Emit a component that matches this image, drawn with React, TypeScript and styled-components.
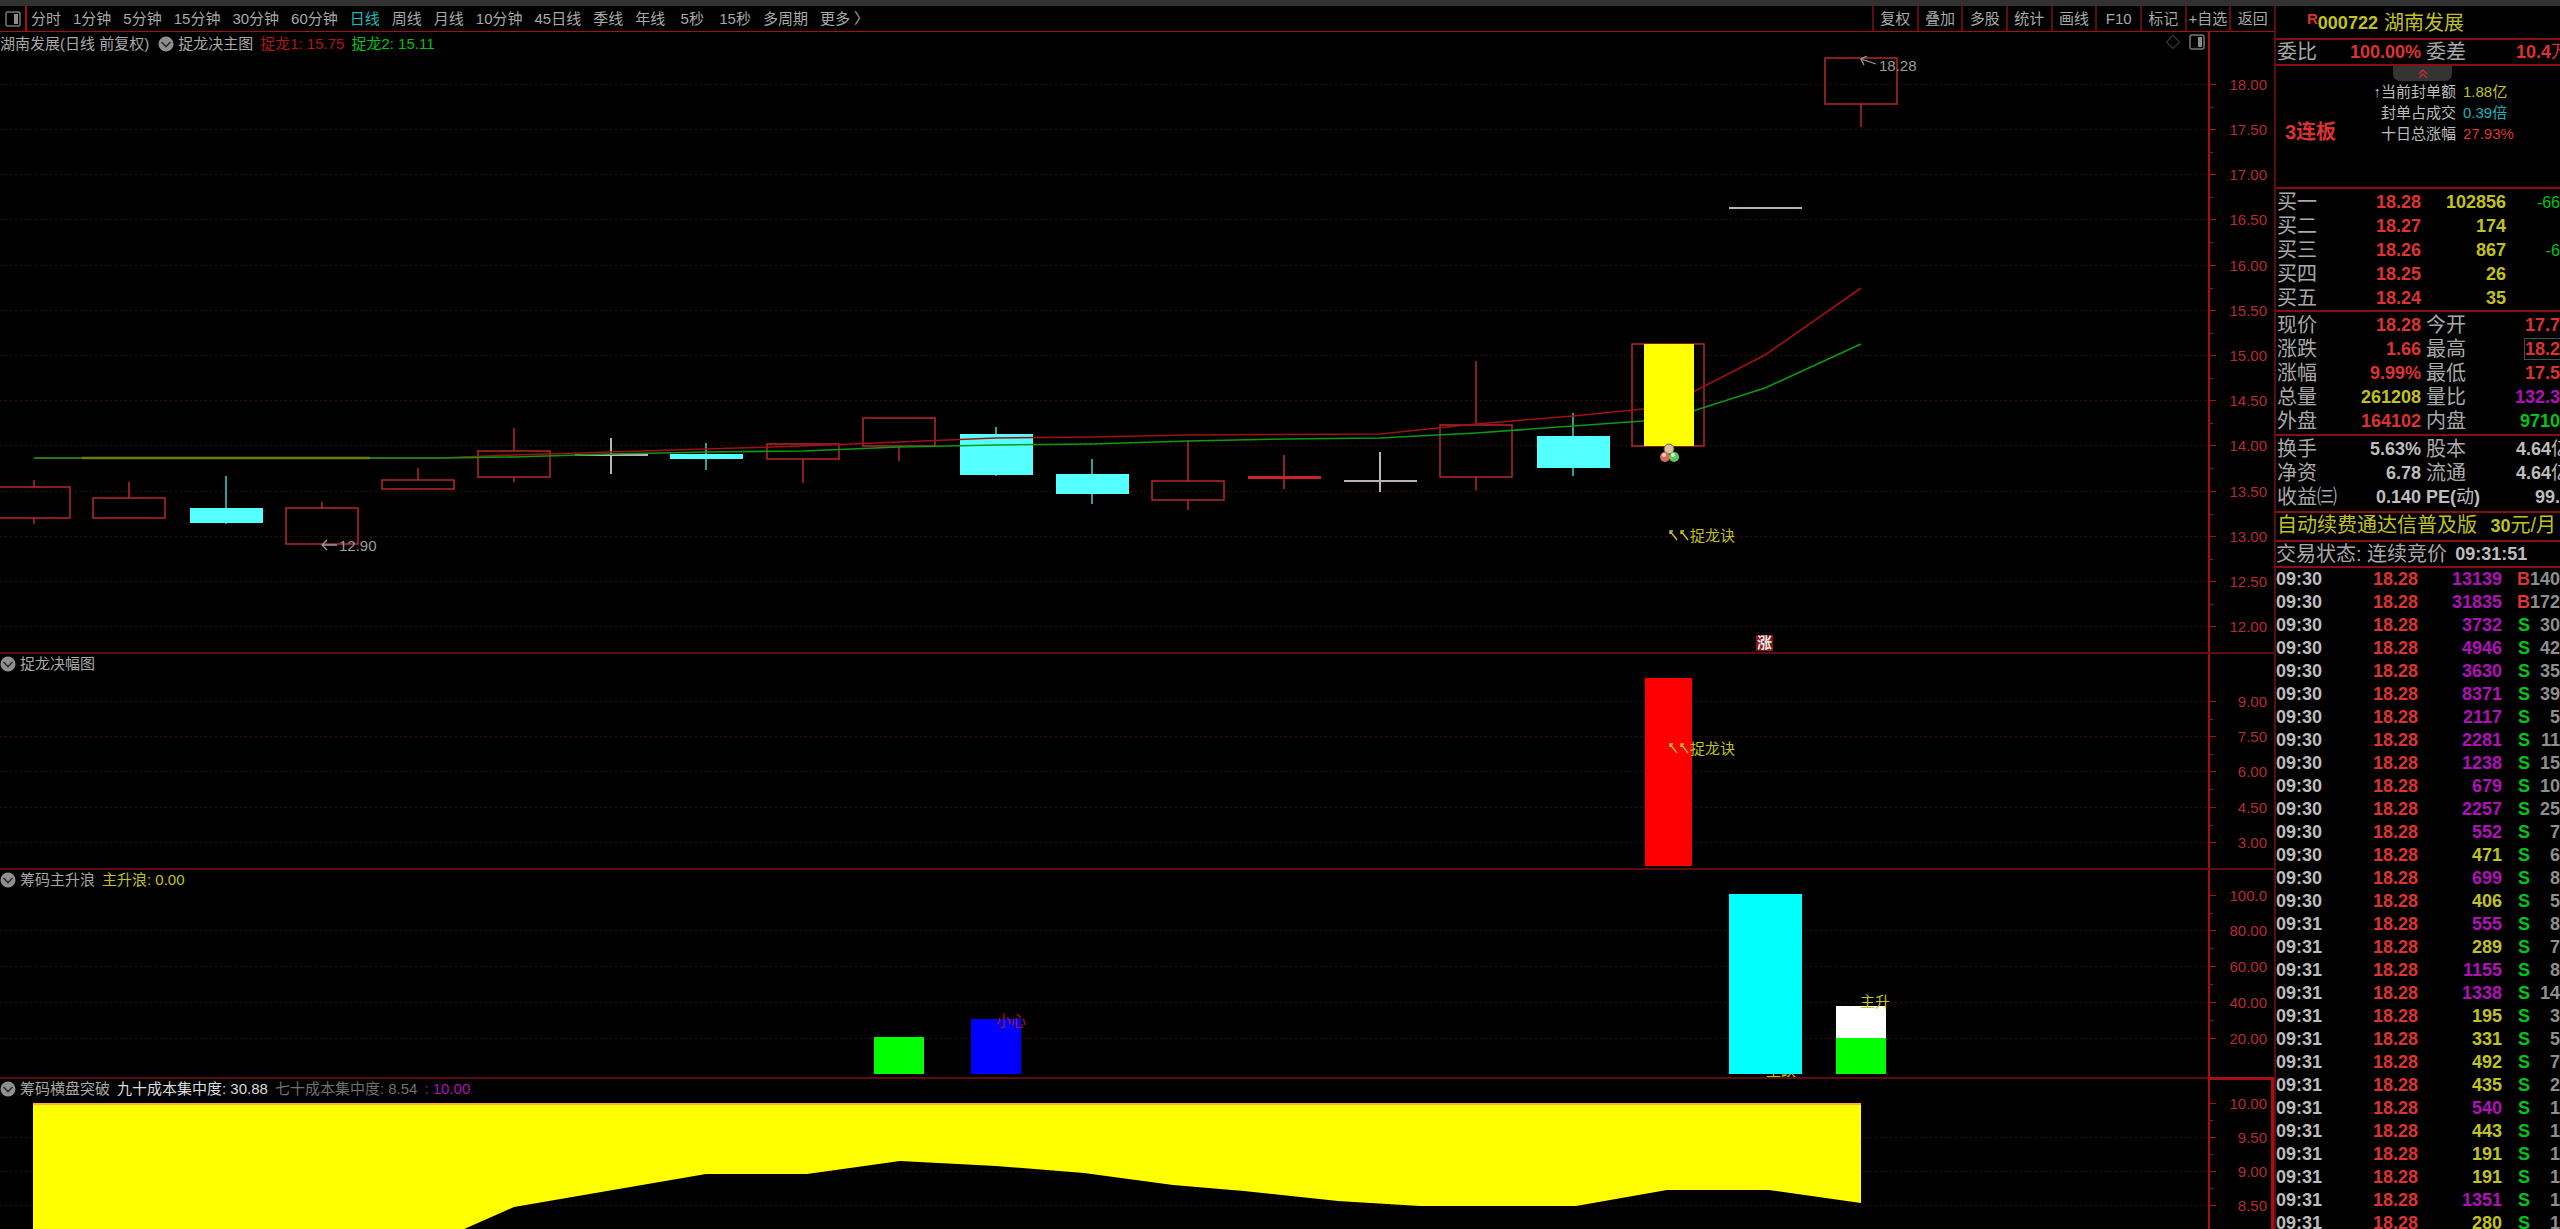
import React from "react";
import styled, { createGlobalStyle, css } from "styled-components";

const C = {
  text: "#a9a9a9",
  bright: "#bdbdbd",
  red: "#dc3232",
  deepRed: "#a80f14",
  yellow: "#c2c21e",
  green: "#00c418",
  purple: "#b010b8",
  cyan: "#18b4bc",
  rule: "#8a0d12",
  faintRule: "#5e0c10",
  axis: "#b62a36",
  grid: "#400a0c",
  candleRed: "#b42a2e",
  candleCyan: "#54ffff",
};

const Global = createGlobalStyle`
  * { box-sizing: border-box; }
  body {
    margin: 0;
    background: #000;
    color: ${C.text};
    font-family: "Liberation Sans", "Noto Sans CJK SC", sans-serif;
    font-size: 15px;
  }
  button {
    border: 0;
    padding: 0;
    background: none;
    color: inherit;
    font: inherit;
    white-space: nowrap;
    cursor: pointer;
  }
  table { border-collapse: collapse; table-layout: fixed; width: 100%; }
  td, th { padding: 0; font-weight: normal; white-space: nowrap; }
`;

const Screen = styled.div`
  display: flex;
  flex-direction: column;
  height: 100vh;
  overflow: hidden;
`;

const WindowEdge = styled.div`
  flex: none;
  height: 6px;
  background: #323232;
`;

const Workspace = styled.div`
  flex: 1;
  min-height: 0;
  display: grid;
  grid-template-columns: minmax(0, 1fr) 286px;
`;

const Charts = styled.main`
  display: flex;
  flex-direction: column;
  min-height: 0;
`;

const Toolbar = styled.nav`
  flex: none;
  display: flex;
  justify-content: space-between;
  height: 26px;
  border-bottom: 1px solid ${C.deepRed};
`;

const Periods = styled.div`
  display: flex;
  align-items: center;
  gap: 12px;
`;

const LayoutToggle = styled.button`
  display: flex;
  align-items: center;
  justify-content: center;
  width: 27px;
  height: 25px;
  margin-right: -8px;
  border-right: 2px solid ${C.deepRed};
`;

const Period = styled.button<{ $active?: boolean }>`
  min-width: 30px;
  line-height: 24px;
  color: ${(p) => (p.$active ? "#22b8b8" : C.text)};
`;

const Actions = styled.div`
  display: grid;
  grid-template-columns: repeat(9, 1fr);
  width: 402px;
`;

const Action = styled.button`
  border-left: 2px solid ${C.faintRule};
  line-height: 24px;
`;

const Panel = styled.section<{ $weight: number; $last?: boolean }>`
  flex: ${(p) => p.$weight} 1 0;
  min-height: 0;
  display: grid;
  grid-template-columns: minmax(0, 1fr) 64px;
  border-bottom: ${(p) => (p.$last ? "0" : `2px solid ${C.faintRule}`)};
`;

const Plot = styled.div`
  display: flex;
  flex-direction: column;
  min-height: 0;
`;

const Legend = styled.header<{ $sub?: boolean }>`
  flex: none;
  display: flex;
  align-items: center;
  justify-content: space-between;
  height: 24px;
  padding-right: 5px;
  padding-bottom: ${(p) => (p.$sub ? 4 : 0)}px;
  line-height: 20px;
  white-space: pre;
`;

const LegendItems = styled.div`
  display: flex;
  align-items: center;
  gap: 7px;
`;

const LegendTitle = styled.span`
  margin-right: 2px;
`;

const Fold = styled.button`
  display: flex;
  margin-right: -3px;
`;

const Tone = styled.span<{ $c: string }>`
  color: ${(p) => p.$c};
`;

const LegendTools = styled.div`
  display: flex;
  align-items: center;
  gap: 8px;
`;

const Canvas = styled.svg`
  flex: 1;
  display: block;
  width: 100%;
  min-height: 0;
`;

const AxisBox = styled.div<{ $active?: boolean }>`
  display: flex;
  min-height: 0;
  margin-left: -2px;
  border-left: 2px solid ${C.deepRed};
  ${(p) =>
    p.$active &&
    css`
      margin-top: -2px;
      border: 3px solid ${C.deepRed};
      border-bottom: 0;
      border-left-width: 2px;
    `}
`;

const Side = styled.aside`
  display: flex;
  flex-direction: column;
  min-height: 0;
  overflow: hidden;
  border-left: 2px solid ${C.faintRule};
`;

const Block = styled.div`
  flex: none;
  padding-top: 1px;
  border-bottom: 2px solid ${C.rule};
`;

const StockTitle = styled(Block)`
  display: flex;
  align-items: center;
  gap: 6px;
  height: 34px;
  padding-left: 31px;
  font-size: 20px;
  line-height: 24px;
  color: ${C.yellow};
`;

const Mark = styled.sup`
  align-self: flex-start;
  margin-right: -6px;
  font-size: 15px;
  line-height: 24px;
  font-weight: bold;
  color: ${C.red};
`;

const Num = styled.span<{ $c?: string; $cut?: boolean; $framed?: boolean }>`
  font-size: 18px;
  font-weight: bold;
  color: ${(p) => p.$c ?? C.bright};
  margin-right: ${(p) => (p.$cut ? "-9px" : "0")};
  ${(p) =>
    p.$framed &&
    css`
      outline: 1px solid #3c5050;
    `}
`;

const Unit = styled.span`
  font-weight: normal;
`;

const Ratio = styled(Block)`
  height: 26px;
  padding-top: 0;
`;

const LimitBlock = styled(Block)`
  height: 123px;
  padding-top: 0;
`;

const Pull = styled.button`
  display: flex;
  align-items: center;
  justify-content: center;
  width: 59px;
  height: 15px;
  margin-left: 117px;
  border-radius: 0 0 7px 7px;
  background: #343434;
`;

const LimitBody = styled.div`
  display: grid;
  grid-template-columns: 82px auto;
  align-items: start;
  padding-left: 9px;
`;

const Boards = styled.strong`
  padding-top: 36px;
  font-size: 20px;
  line-height: 30px;
  color: ${C.red};
`;

const Facts = styled.dl`
  display: grid;
  grid-template-columns: 89px auto;
  column-gap: 7px;
  margin: 0;
  line-height: 21px;
  dt { text-align: right; color: ${C.bright}; }
  dd { margin: 0; }
`;

const Row = styled.tr<{ $h?: number }>`
  height: ${(p) => p.$h ?? 24}px;
  line-height: ${(p) => (p.$h ?? 24) - 1}px;
`;

const Label = styled.th<{ $second?: boolean }>`
  padding-left: ${(p) => (p.$second ? 5 : 1)}px;
  font-size: 20px;
  text-align: left;
`;

const Value = styled.td`
  text-align: right;
`;

const Delta = styled.span`
  font-size: 16px;
  color: ${C.green};
`;

const Quotes = styled(Block)`
  padding-bottom: 1px;
`;

const Basics = styled(Block)`
  padding-bottom: 2px;
`;

const Promo = styled.a`
  flex: none;
  display: flex;
  align-items: center;
  justify-content: space-between;
  height: 29px;
  padding: 0 4px 3px 1px;
  border-bottom: 2px solid ${C.rule};
  font-size: 20px;
  line-height: 26px;
  color: ${C.yellow};
  text-decoration: none;
  white-space: nowrap;
`;

const Status = styled(Block)`
  display: flex;
  align-items: center;
  gap: 8px;
  height: 26px;
  padding: 0;
  font-size: 20px;
  line-height: 22px;
  white-space: nowrap;
`;

const Tape = styled.div`
  flex: 1;
  min-height: 0;
  overflow: hidden;
`;

/* ---------- data ---------- */

const periods = ["分时", "1分钟", "5分钟", "15分钟", "30分钟", "60分钟", "日线", "周线", "月线", "10分钟", "45日线", "季线", "年线", "5秒", "15秒", "多周期"];
const actions = ["复权", "叠加", "多股", "统计", "画线", "F10", "标记", "+自选", "返回"];

type Candle = { x: number; top: number; bottom: number; high: number; low: number; kind: "up" | "down" | "flat" | "flatUp" };
const candles: Candle[] = [
  { x: 34, top: 487, bottom: 518, high: 480, low: 524, kind: "up" },
  { x: 129, top: 498, bottom: 518, high: 482, low: 518, kind: "up" },
  { x: 226, top: 508, bottom: 523, high: 476, low: 524, kind: "down" },
  { x: 322, top: 508, bottom: 544, high: 502, low: 544, kind: "up" },
  { x: 418, top: 480, bottom: 489, high: 468, low: 489, kind: "up" },
  { x: 514, top: 451, bottom: 477, high: 428, low: 482, kind: "up" },
  { x: 611, top: 454, bottom: 456, high: 438, low: 474, kind: "flat" },
  { x: 706, top: 454, bottom: 459, high: 443, low: 470, kind: "down" },
  { x: 803, top: 444, bottom: 459, high: 444, low: 483, kind: "up" },
  { x: 899, top: 418, bottom: 446, high: 418, low: 461, kind: "up" },
  { x: 996, top: 434, bottom: 475, high: 427, low: 476, kind: "down" },
  { x: 1092, top: 474, bottom: 494, high: 459, low: 504, kind: "down" },
  { x: 1188, top: 481, bottom: 500, high: 440, low: 510, kind: "up" },
  { x: 1284, top: 476, bottom: 479, high: 455, low: 489, kind: "flatUp" },
  { x: 1380, top: 480, bottom: 482, high: 452, low: 492, kind: "flat" },
  { x: 1476, top: 425, bottom: 477, high: 361, low: 490, kind: "up" },
  { x: 1573, top: 436, bottom: 468, high: 413, low: 476, kind: "down" },
  { x: 1668, top: 344, bottom: 446, high: 344, low: 446, kind: "up" },
  { x: 1765, top: 207, bottom: 209, high: 207, low: 209, kind: "flat" },
  { x: 1861, top: 58, bottom: 104, high: 58, low: 127, kind: "up" },
];

const redLine = "34,458 440,458 514,455 611,452 706,449 803,446 899,442 996,438 1092,437 1188,435 1380,434 1476,424 1573,416 1643,409 1693,392 1765,355 1861,288";
const greenLine = "34,458 440,458 514,457 611,454 706,452 803,451 899,447 996,445 1092,444 1188,441 1285,439 1380,438 1476,433 1573,426 1643,421 1693,411 1765,388 1861,344";
const areaShape = "33,1103 1861,1103 1861,1203 1769,1190 1667,1190 1576,1206 1420,1206 1338,1201 1244,1191 1173,1185 1084,1173 996,1166 900,1161 807,1174 706,1174 514,1207 462,1230 33,1230";

type Tick = { y: number; label: string };
const scale = (y0: number, step: number, labels: string[]): Tick[] =>
  labels.map((label, i) => ({ y: Math.round(y0 + step * i), label }));

const mainTicks = scale(83.7, 45.2, ["18.00", "17.50", "17.00", "16.50", "16.00", "15.50", "15.00", "14.50", "14.00", "13.50", "13.00", "12.50", "12.00"]);
const secondTicks = scale(701, 35.2, ["9.00", "7.50", "6.00", "4.50", "3.00"]);
const waveTicks = scale(894.5, 35.9, ["100.0", "80.00", "60.00", "40.00", "20.00"]);
const costTicks = scale(1102.7, 34.1, ["10.00", "9.50", "9.00", "8.50"]);

const bids = [
  ["买一", "18.28", "102856", "-66"],
  ["买二", "18.27", "174", ""],
  ["买三", "18.26", "867", "-6"],
  ["买四", "18.25", "26", ""],
  ["买五", "18.24", "35", ""],
];

type Quote = { a: string; av: string; ac?: string; b: string; bv: string; bc?: string; unit?: string; framed?: boolean };
const ratio: Quote[] = [{ a: "委比", av: "100.00%", ac: C.red, b: "委差", bv: "10.4", bc: C.red, unit: "万" }];
const quotes: Quote[] = [
  { a: "现价", av: "18.28", ac: C.red, b: "今开", bv: "17.7", bc: C.red },
  { a: "涨跌", av: "1.66", ac: C.red, b: "最高", bv: "18.2", bc: C.red, framed: true },
  { a: "涨幅", av: "9.99%", ac: C.red, b: "最低", bv: "17.5", bc: C.red },
  { a: "总量", av: "261208", ac: C.yellow, b: "量比", bv: "132.3", bc: C.purple },
  { a: "外盘", av: "164102", ac: C.red, b: "内盘", bv: "9710", bc: C.green },
];
const basics: Quote[] = [
  { a: "换手", av: "5.63%", b: "股本", bv: "4.64", unit: "亿" },
  { a: "净资", av: "6.78", b: "流通", bv: "4.64", unit: "亿" },
  { a: "收益㈢", av: "0.140", b: "PE(动)", bv: "99." },
];

const trades: [string, number, string, string][] = [
  ["09:30", 13139, "B", "140"],
  ["09:30", 31835, "B", "172"],
  ["09:30", 3732, "S", "30"],
  ["09:30", 4946, "S", "42"],
  ["09:30", 3630, "S", "35"],
  ["09:30", 8371, "S", "39"],
  ["09:30", 2117, "S", "5"],
  ["09:30", 2281, "S", "11"],
  ["09:30", 1238, "S", "15"],
  ["09:30", 679, "S", "10"],
  ["09:30", 2257, "S", "25"],
  ["09:30", 552, "S", "7"],
  ["09:30", 471, "S", "6"],
  ["09:30", 699, "S", "8"],
  ["09:30", 406, "S", "5"],
  ["09:31", 555, "S", "8"],
  ["09:31", 289, "S", "7"],
  ["09:31", 1155, "S", "8"],
  ["09:31", 1338, "S", "14"],
  ["09:31", 195, "S", "3"],
  ["09:31", 331, "S", "5"],
  ["09:31", 492, "S", "7"],
  ["09:31", 435, "S", "2"],
  ["09:31", 540, "S", "1"],
  ["09:31", 443, "S", "1"],
  ["09:31", 191, "S", "1"],
  ["09:31", 191, "S", "1"],
  ["09:31", 1351, "S", "1"],
  ["09:31", 280, "S", "1"],
];

/* ---------- drawings ---------- */

const SplitIcon = () => (
  <svg width="16" height="16" viewBox="0 0 16 16" aria-hidden="true">
    <rect x="1" y="1" width="14" height="14" rx="2" fill="none" stroke="#777" strokeWidth="1.5" />
    <rect x="9" y="3" width="4" height="10" fill="#8c8c8c" />
  </svg>
);

const DiamondIcon = () => (
  <svg width="16" height="16" viewBox="0 0 16 16" aria-hidden="true">
    <path d="M8 1.5 L14.5 8 L8 14.5 L1.5 8 Z" fill="none" stroke="#5a5a5a" />
  </svg>
);

const FoldIcon = () => (
  <svg width="16" height="16" viewBox="0 0 16 16" aria-hidden="true">
    <circle cx="8" cy="8" r="7.5" fill="#8f8f8f" />
    <path d="M3.5 6 L8 10.5 L12.5 6" fill="none" stroke="#2c2c2c" strokeWidth="1.6" />
  </svg>
);

const CandleShape = ({ c }: { c: Candle }) => {
  const left = c.x - 36;
  if (c.kind === "up") {
    return (
      <g stroke={C.candleRed} strokeWidth="1.5" fill="none">
        <rect x={left} y={c.top} width="72" height={c.bottom - c.top} />
        <path d={`M${c.x} ${c.high} V${c.top} M${c.x} ${c.bottom} V${c.low}`} />
      </g>
    );
  }
  const color = { down: C.candleCyan, flat: "#b9b2b9", flatUp: "#c82428" }[c.kind];
  const wick = { down: "#3fc4c4", flat: "#e4e4e4", flatUp: C.candleRed }[c.kind];
  return (
    <g>
      <path d={`M${c.x} ${c.high} V${c.low}`} stroke={wick} strokeWidth="1.6" />
      <rect x={left} y={c.top} width="73" height={c.bottom - c.top} fill={color} />
    </g>
  );
};

const GridLines = ({ ticks, from = 0 }: { ticks: Tick[]; from?: number }) => (
  <g stroke={C.grid} strokeDasharray="2 3">
    {ticks.slice(from).map((t) => (
      <line key={t.y} x1="0" x2="2208" y1={t.y + 0.5} y2={t.y + 0.5} />
    ))}
  </g>
);

const Signal = ({ x, y }: { x: number; y: number }) => (
  <g fill={C.yellow}>
    <path
      d={`M${x + 1} ${y - 4} l7 9 M${x + 1} ${y - 1} v-3 h3 M${x + 12} ${y - 4} l7 9 M${x + 12} ${y - 1} v-3 h3`}
      stroke={C.yellow}
      strokeWidth="1.4"
      fill="none"
    />
    <text x={x + 21} y={y + 6} fontSize="15">捉龙诀</text>
  </g>
);

const Axis = ({ ticks, top, height, active }: { ticks: Tick[]; top: number; height: number; active?: boolean }) => {
  const half = (ticks[1].y - ticks[0].y) / 2;
  return (
    <AxisBox $active={active}>
      <Canvas viewBox={`2210 ${top} ${active ? 61 : 64} ${height}`} preserveAspectRatio="xMinYMin meet">
        {ticks.map((t, i) => (
          <g key={t.label}>
            <path
              d={`M2210 ${t.y + 0.5} h6 ${i < ticks.length - 1 ? `M2210 ${Math.round(t.y + half) + 0.5} h3` : ""}`}
              stroke={C.deepRed}
            />
            <text x="2267" y={t.y + 6} fontSize="15" textAnchor="end" fill={C.axis}>{t.label}</text>
          </g>
        ))}
      </Canvas>
    </AxisBox>
  );
};

const Drawing = ({ top, height, children }: { top: number; height: number; children: React.ReactNode }) => (
  <Canvas viewBox={`0 ${top} 2210 ${height}`} preserveAspectRatio="xMinYMin meet">{children}</Canvas>
);

const FoldButton = () => (
  <Fold aria-label="指标菜单"><FoldIcon /></Fold>
);

const QuoteTable = ({ rows }: { rows: Quote[] }) => (
  <table>
    <colgroup><col width="62" /><col width="83" /><col width="46" /><col /></colgroup>
    <tbody>
      {rows.map((q) => (
        <Row key={q.a}>
          <Label scope="row">{q.a}</Label>
          <Value><Num $c={q.ac}>{q.av}</Num></Value>
          <Label scope="row" $second>{q.b.startsWith("PE") ? <Num>PE(<Unit>动</Unit>)</Num> : q.b}</Label>
          <Value>
            <Num $c={q.bc} $cut={!!q.unit} $framed={q.framed}>{q.bv}{q.unit && <Unit>{q.unit}</Unit>}</Num>
          </Value>
        </Row>
      ))}
    </tbody>
  </table>
);

/* ---------- page ---------- */

export default function App() {
  return (
    <Screen>
      <Global />
      <WindowEdge />
      <Workspace>
        <Charts>
          <Toolbar>
            <Periods>
              <LayoutToggle aria-label="布局"><SplitIcon /></LayoutToggle>
              {periods.map((p) => (
                <Period key={p} $active={p === "日线"}>{p}</Period>
              ))}
              <Period>更多 〉</Period>
            </Periods>
            <Actions>
              {actions.map((a) => (
                <Action key={a}>{a}</Action>
              ))}
            </Actions>
          </Toolbar>

          <Panel $weight={620}>
            <Plot>
              <Legend>
                <LegendItems>
                  <LegendTitle>湖南发展(日线 前复权)</LegendTitle>
                  <FoldButton />
                  <span>捉龙决主图</span>
                  <Tone $c="#b4161a">捉龙1: 15.75</Tone>
                  <Tone $c={C.green}>捉龙2: 15.11</Tone>
                </LegendItems>
                <LegendTools>
                  <button aria-label="标注"><DiamondIcon /></button>
                  <button aria-label="分栏"><SplitIcon /></button>
                </LegendTools>
              </Legend>
              <Drawing top={56} height={596}>
                <GridLines ticks={mainTicks} />
                {candles.map((c) => (
                  <CandleShape key={c.x} c={c} />
                ))}
                <polyline points={redLine} fill="none" stroke="#a01014" strokeWidth="1.6" />
                <polyline points={greenLine} fill="none" stroke="#0c9a14" strokeWidth="1.6" />
                <path d="M82 458 H370" stroke="#6e7c08" strokeWidth="2.4" />
                <rect x="1644" y="344" width="50" height="102" fill="#ff0" />
                <circle cx="1669" cy="449" r="5" fill="#d8c49a" stroke="#6a5830" />
                <circle cx="1665" cy="457" r="5" fill="#d86a5c" />
                <circle cx="1674" cy="457" r="5" fill="#5cc860" />
                <circle cx="1664" cy="455" r="2" fill="#f4d8d0" />
                <circle cx="1673" cy="455" r="2" fill="#d8f4d8" />
                <Signal x={1669} y={535} />
                <rect x="1756" y="635" width="17" height="16" fill="#8c1014" />
                <text x="1757" y="648" fontSize="15" fontWeight="bold" fill="#e8e8e8">涨</text>
                <path d="M322 545 h15 M327 540 l-5 5 l5 5" fill="none" stroke="#9c9c9c" strokeWidth="1.3" />
                <text x="339" y="551" fontSize="15" fill="#9c9c9c">12.90</text>
                <path d="M1861 59 l15 5 M1867 56 l-6 3 l3 6" fill="none" stroke="#9c9c9c" strokeWidth="1.3" />
                <text x="1879" y="71" fontSize="15" fill="#9c9c9c">18.28</text>
              </Drawing>
            </Plot>
            <Axis ticks={mainTicks} top={32} height={620} />
          </Panel>

          <Panel $weight={214}>
            <Plot>
              <Legend $sub>
                <LegendItems><FoldButton /><span>捉龙决幅图</span></LegendItems>
              </Legend>
              <Drawing top={678} height={190}>
                <GridLines ticks={secondTicks} />
                <rect x="1645" y="678" width="47" height="188" fill="#f00" />
                <Signal x={1669} y={748} />
              </Drawing>
            </Plot>
            <Axis ticks={secondTicks} top={654} height={214} />
          </Panel>

          <Panel $weight={207}>
            <Plot>
              <Legend $sub>
                <LegendItems>
                  <FoldButton />
                  <span>筹码主升浪</span>
                  <Tone $c={C.yellow}>主升浪: 0.00</Tone>
                </LegendItems>
              </Legend>
              <Drawing top={894} height={183}>
                <GridLines ticks={waveTicks} from={1} />
                <rect x="874" y="1037" width="50" height="37" fill="#0f0" />
                <rect x="971" y="1019" width="50" height="55" fill="#00f" />
                <text x="996" y="1026" fontSize="15" fill="#a8142c">小心</text>
                <text x="1766" y="1076" fontSize="15" fill={C.yellow}>主跌</text>
                <rect x="1729" y="894" width="73" height="180" fill="#0ff" />
                <rect x="1836" y="1006" width="50" height="32" fill="#fff" />
                <rect x="1836" y="1038" width="50" height="36" fill="#0f0" />
                <text x="1860" y="1007" fontSize="15" fill={C.yellow}>主升</text>
              </Drawing>
            </Plot>
            <Axis ticks={waveTicks} top={870} height={207} />
          </Panel>

          <Panel $weight={150} $last>
            <Plot>
              <Legend $sub>
                <LegendItems>
                  <FoldButton />
                  <span>筹码横盘突破</span>
                  <Tone $c="#dcdcdc">九十成本集中度: 30.88</Tone>
                  <Tone $c="#707070">七十成本集中度: 8.54</Tone>
                  <Tone $c={C.purple}>: 10.00</Tone>
                </LegendItems>
              </Legend>
              <Drawing top={1103} height={126}>
                <GridLines ticks={costTicks} from={1} />
                <polygon points={areaShape} fill="#ff0" />
                <path d="M33 1104 H1861" stroke="#ffb040" strokeWidth="2" />
              </Drawing>
            </Plot>
            <Axis ticks={costTicks} top={1080} height={149} active />
          </Panel>
        </Charts>

        <Side>
          <StockTitle>
            <Mark>R</Mark>
            <Num $c={C.yellow}>000722</Num>
            <span>湖南发展</span>
          </StockTitle>
          <Ratio><QuoteTable rows={ratio} /></Ratio>
          <LimitBlock>
            <Pull aria-label="收起">
              <svg width="12" height="12" viewBox="0 0 12 12" aria-hidden="true">
                <path d="M2 6 L6 2 L10 6 M2 10 L6 6 L10 10" fill="none" stroke="#b83034" strokeWidth="1.4" />
              </svg>
            </Pull>
            <LimitBody>
              <Boards>3连板</Boards>
              <Facts>
                <dt>↑当前封单额</dt><dd><Tone $c={C.yellow}>1.88亿</Tone></dd>
                <dt>封单占成交</dt><dd><Tone $c={C.cyan}>0.39倍</Tone></dd>
                <dt>十日总涨幅</dt><dd><Tone $c={C.red}>27.93%</Tone></dd>
              </Facts>
            </LimitBody>
          </LimitBlock>
          <Block>
            <table>
              <colgroup><col width="62" /><col width="83" /><col width="85" /><col /></colgroup>
              <tbody>
                {bids.map(([name, price, volume, delta]) => (
                  <Row key={name}>
                    <Label scope="row">{name}</Label>
                    <Value><Num $c={C.red}>{price}</Num></Value>
                    <Value><Num $c={C.yellow}>{volume}</Num></Value>
                    <Value><Delta>{delta}</Delta></Value>
                  </Row>
                ))}
              </tbody>
            </table>
          </Block>
          <Quotes><QuoteTable rows={quotes} /></Quotes>
          <Basics><QuoteTable rows={basics} /></Basics>
          <Promo href="#renew">
            <span>自动续费通达信普及版</span>
            <span><Num $c={C.yellow}>30</Num>元/月</span>
          </Promo>
          <Status>
            <span>交易状态: 连续竞价</span>
            <Num>09:31:51</Num>
          </Status>
          <Tape>
            <table>
              <colgroup><col width="60" /><col width="82" /><col width="84" /><col width="28" /><col /></colgroup>
              <tbody>
                {trades.map(([time, volume, side, count], i) => (
                  <Row key={i} $h={23}>
                    <td><Num>{time}</Num></td>
                    <Value><Num $c={C.red}>18.28</Num></Value>
                    <Value><Num $c={volume > 500 ? C.purple : C.yellow}>{volume}</Num></Value>
                    <Value><Num $c={side === "B" ? C.red : C.green}>{side}</Num></Value>
                    <Value><Num $c="#8e8e8e">{count}</Num></Value>
                  </Row>
                ))}
              </tbody>
            </table>
          </Tape>
        </Side>
      </Workspace>
    </Screen>
  );
}
